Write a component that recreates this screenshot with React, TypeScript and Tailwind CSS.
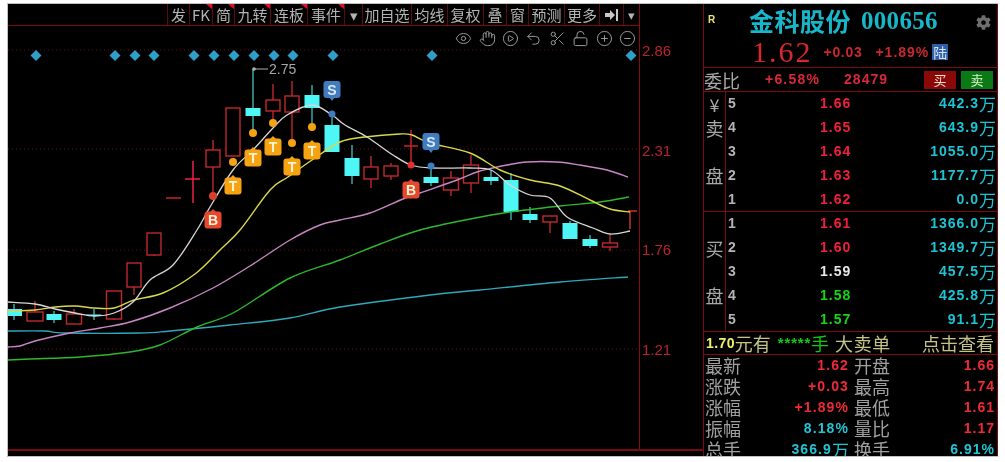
import { CircleMinus, CirclePlay, CirclePlus, Eye, Hand, LockOpen, Scissors, Undo2 } from "lucide-react";
import { FaCog } from "react-icons/fa";

const CJK = "font-['Noto_Sans_CJK_SC','Liberation_Sans',sans-serif]";
const NUM = "font-['Liberation_Sans','Noto_Sans_CJK_SC',sans-serif]";

const TOOLBAR = [
  { label: "发", w: "w-[22px]" },
  { label: "FK", w: "w-[23px]", flag: true },
  { label: "简", w: "w-[22px]", flag: true },
  { label: "九转", w: "w-[36px]", flag: true },
  { label: "连板", w: "w-[37px]", flag: true },
  { label: "事件", w: "w-[37px]", flag: true },
  { label: "▾", w: "w-[18px]" },
  { label: "加自选", w: "w-[49px]" },
  { label: "均线", w: "w-[36px]" },
  { label: "复权", w: "w-[36px]" },
  { label: "叠", w: "w-[23px]" },
  { label: "窗", w: "w-[22px]" },
  { label: "预测", w: "w-[36px]" },
  { label: "更多", w: "w-[35px]" },
];

const DIAMONDS = [36, 115, 135, 154, 194, 214, 234, 254, 274, 293, 333, 432, 631];

// x, body top, body bottom, wick top, wick bottom, half width
const UP: number[][] = [
  [35, 312, 321, 301, 321, 8], [74, 314, 324, 309, 324, 7.5], [114, 291, 319, 291, 320, 7.5],
  [134, 263, 287, 263, 295, 7], [154, 233, 255, 233, 256, 7], [213, 150, 167, 140, 197, 7],
  [233, 108, 156, 108, 156, 7], [273, 100, 111, 84, 124, 7], [292, 96, 112, 81, 140, 7],
  [371, 167, 179, 156, 188, 7], [391, 166, 176, 163, 180, 7], [451, 178, 190, 171, 196, 7.5],
  [471, 165, 183, 155, 193, 7.5], [550, 216, 222, 216, 233, 7], [610, 243, 247, 235, 251, 7.5],
];
const DOWN: number[][] = [
  [14, 309, 316, 304, 320, 8], [54, 314, 320, 311, 323, 7.5], [94, 314.5, 316, 309, 320, 7.5],
  [253, 108, 116, 69, 131, 7.5], [312, 95, 108, 85, 125, 7.5], [332, 125, 152, 115, 152, 7.5],
  [352, 158, 176, 145, 184, 7.5], [431, 177, 183, 165, 186, 7.5], [491, 177, 181, 170, 185, 7.5],
  [511, 180, 212, 173, 220, 7.5], [530, 214, 220, 207, 223, 7.5], [570, 223, 239, 221, 239, 7.5],
  [590, 239, 246, 235, 248, 7.5],
];

const MA5 = [[8,302],[35,304],[55,309],[75,313],[95,316],[114,313],[133,302],[150,280],[173,265],[197,230],[210,207],[233,170],[253,150],[273,128],[287,115],[312,105],[332,115],[345,125],[367,137],[393,155],[411,165],[431,168],[470,168],[491,170],[510,185],[530,195],[550,198],[567,217],[593,228],[610,234],[630,231]];
const MA10 = [[8,311],[35,310],[55,307],[75,306],[94,308],[114,308],[134,300],[163,293],[195,274],[220,250],[240,230],[270,190],[288,177],[312,160],[340,142],[365,137],[400,134],[412,135],[430,143],[470,153],[500,170],[530,180],[560,186],[590,200],[610,209],[630,212]];
const MA20 = [[8,347],[20,346],[35,341],[70,333],[100,328],[130,322],[170,308],[213,288],[250,266],[290,240],[320,225],[340,220],[370,213],[403,199],[420,193],[457,180],[477,172],[493,168],[507,165],[527,162],[557,162],[580,165],[607,170],[628,177]];
const MA60 = [[8,360],[30,359],[80,357],[130,352],[160,345],[197,327],[233,313],[290,278],[340,260],[380,244],[420,230],[470,219],[510,212],[560,206],[600,202],[629,197]];
const MA250 = [[8,331],[45,331],[65,333],[140,333],[170,331],[230,325],[290,318],[340,307],[430,295],[480,290],[560,282],[628,277]];

// catmull-rom through the points so the averages don't look angular
const smooth = (pts: number[][]) => {
  let d = `M${pts[0][0]} ${pts[0][1]}`;
  for (let i = 0; i < pts.length - 1; i++) {
    const p0 = pts[i - 1] ?? pts[i];
    const p1 = pts[i];
    const p2 = pts[i + 1];
    const p3 = pts[i + 2] ?? p2;
    d += ` C${p1[0] + (p2[0] - p0[0]) / 6} ${p1[1] + (p2[1] - p0[1]) / 6} ${p2[0] - (p3[0] - p1[0]) / 6} ${p2[1] - (p3[1] - p1[1]) / 6} ${p2[0]} ${p2[1]}`;
  }
  return d;
};

const Badge = ({ x, y, label, color }: { x: number; y: number; label: string; color: string }) => (
  <g>
    <path d={`M${x - 3} ${y - 8} L${x} ${y - 11} L${x + 3} ${y - 8} Z`} fill={color} />
    <rect x={x - 8.5} y={y - 8.5} width={17} height={17} rx={3} fill={color} />
    <text x={x} y={y + 5} textAnchor="middle" fontSize={14} fontWeight={700} fill="#fff3d0" fontFamily="Liberation Sans">{label}</text>
  </g>
);

const Chart = () => (
  <svg viewBox="8 26 631 424" width={631} height={424} className="block">
    {[50, 149, 250, 349].map((y) => (
      <line key={y} x1={8} x2={639} y1={y} y2={y} stroke="#6a0c12" strokeDasharray="1 3" />
    ))}
    {DIAMONDS.map((x) => (
      <path key={x} d={`M${x} 50 L${x + 5.5} 55.5 L${x} 61 L${x - 5.5} 55.5 Z`} fill="#2f9ec8" />
    ))}

    <path d="M174 198 H166 M181 198 H174" stroke="#c8242a" strokeWidth={1.5} />
    <path d="M193 161 V203 M185 179 H200" stroke="#f0214a" strokeWidth={1.5} />
    <path d="M411 130 V165 M404 146 H418" stroke="#c8242a" strokeWidth={1.5} />
    <path d="M628 211 H637 M630 211 V229" stroke="#c8342a" strokeWidth={1.5} />

    {UP.map(([x, t, b, wt, wb, h]) => (
      <g key={x} stroke="#c0282e" strokeWidth={1.4} fill="none">
        <path d={`M${x} ${wt} V${t} M${x} ${b} V${wb}`} />
        <rect x={x - h} y={t} width={h * 2} height={b - t} fill="#000" />
      </g>
    ))}
    {DOWN.map(([x, t, b, wt, wb, h]) => (
      <g key={x}>
        <path d={`M${x} ${wt} V${wb}`} stroke="#3fb4b4" strokeWidth={1.4} />
        <rect x={x - h} y={t} width={h * 2} height={b - t} fill="#4ef6f6" />
      </g>
    ))}

    <path d={smooth(MA250)} fill="none" stroke="#2fa8bc" strokeWidth={1.4} />
    <path d={smooth(MA60)} fill="none" stroke="#2cb82c" strokeWidth={1.4} />
    <path d={smooth(MA20)} fill="none" stroke="#c886c4" strokeWidth={1.4} />
    <path d={smooth(MA10)} fill="none" stroke="#d8d84a" strokeWidth={1.4} />
    <path d={smooth(MA5)} fill="none" stroke="#d8d8d8" strokeWidth={1.3} />

    {[[233, 162], [253, 133], [273, 123], [292, 143], [312, 127]].map(([x, y]) => (
      <circle key={x} cx={x} cy={y} r={4} fill="#f5a313" />
    ))}
    <circle cx={213} cy={196} r={4} fill="#d8402c" />
    <circle cx={411} cy={165} r={3.5} fill="#e03030" />
    <circle cx={332} cy={114} r={3.5} fill="#3f7cc0" />
    <circle cx={431} cy={166} r={3.5} fill="#3f7cc0" />

    <Badge x={233} y={186} label="T" color="#f5a313" />
    <Badge x={253} y={158} label="T" color="#f5a313" />
    <Badge x={273} y={147} label="T" color="#f5a313" />
    <Badge x={292} y={167} label="T" color="#f5a313" />
    <Badge x={312} y={151} label="T" color="#f5a313" />
    <Badge x={213} y={220} label="B" color="#e5472f" />
    <Badge x={411} y={190} label="B" color="#e5472f" />
    <path d="M329 97 L332 101 L335 97 Z M428 149 L431 153 L434 149 Z" fill="#3f7cc0" />
    <g>
      <rect x={323.5} y={81} width={17} height={17} rx={3} fill="#3f7cc0" />
      <text x={332} y={95} textAnchor="middle" fontSize={14} fontWeight={700} fill="#dfe8f5" fontFamily="Liberation Sans">S</text>
      <rect x={422.5} y={133} width={17} height={17} rx={3} fill="#3f7cc0" />
      <text x={431} y={147} textAnchor="middle" fontSize={14} fontWeight={700} fill="#dfe8f5" fontFamily="Liberation Sans">S</text>
    </g>

    <circle cx={254} cy={69} r={1.8} fill="#b0b0b0" />
    <line x1={254} x2={268} y1={69} y2={69} stroke="#b0b0b0" />
    <text x={269} y={74} fontSize={14} fill="#a8a8a8" fontFamily="Liberation Sans">2.75</text>
  </svg>
);

const Toolbar = () => (
  <div className="flex h-[22px] justify-end border-b border-[#7a0a12]">
    {TOOLBAR.map((item) => (
      <div
        key={item.label}
        className={`${item.w} relative flex items-center justify-center border-l border-[#5c0a10] text-[15px] leading-none text-[#b4b4b4] whitespace-nowrap ${CJK}`}
      >
        {item.label}
        {item.flag && (
          <span className="absolute right-0 top-0 h-0 w-0 border-l-[6px] border-t-[5px] border-l-transparent border-t-[#e0102a]" />
        )}
      </div>
    ))}
    <div className="flex w-[24px] items-center justify-center border-l border-[#5c0a10]">
      <svg width={14} height={12} viewBox="0 0 14 12">
        <path d="M0 4 H5 V1 L10 6 L5 11 V8 H0 Z M11 0 H13 V12 H11 Z" fill="#c8c8c8" />
      </svg>
    </div>
    <div className={`flex w-[16px] items-center justify-center border-l border-[#5c0a10] text-[13px] text-[#b4b4b4] ${CJK}`}>▾</div>
  </div>
);

const ChartTools = () => (
  <div className="absolute right-[3px] top-[4px] flex items-center gap-[6.4px] text-[#9a9a9a]">
    <Eye size={17} strokeWidth={1.4} />
    <Hand size={17} strokeWidth={1.4} />
    <CirclePlay size={17} strokeWidth={1.4} />
    <Undo2 size={17} strokeWidth={1.4} />
    <Scissors size={17} strokeWidth={1.4} />
    <LockOpen size={17} strokeWidth={1.4} />
    <CirclePlus size={17} strokeWidth={1.4} />
    <CircleMinus size={17} strokeWidth={1.4} />
  </div>
);

const SELL = [
  { side: "¥", n: "5", price: "1.66", vol: "442.3", c: "text-[#f0203c]" },
  { side: "卖", n: "4", price: "1.65", vol: "643.9", c: "text-[#f0203c]" },
  { side: "", n: "3", price: "1.64", vol: "1055.0", c: "text-[#f0203c]" },
  { side: "盘", n: "2", price: "1.63", vol: "1177.7", c: "text-[#f0203c]" },
  { side: "", n: "1", price: "1.62", vol: "0.0", c: "text-[#f0203c]" },
];
const BUY = [
  { side: "", n: "1", price: "1.61", vol: "1366.0", c: "text-[#f0203c]" },
  { side: "买", n: "2", price: "1.60", vol: "1349.7", c: "text-[#f0203c]" },
  { side: "", n: "3", price: "1.59", vol: "457.5", c: "text-[#e8e8e8]" },
  { side: "盘", n: "4", price: "1.58", vol: "425.8", c: "text-[#12d812]" },
  { side: "", n: "5", price: "1.57", vol: "91.1", c: "text-[#12d812]" },
];

const RED = "text-[#ee2a36]";
const CYAN = "text-[#22c4d4]";
const STATS = [
  { a: "最新", v: "1.62", vc: RED, b: "开盘", w: "1.66", wc: RED },
  { a: "涨跌", v: "+0.03", vc: RED, b: "最高", w: "1.74", wc: RED },
  { a: "涨幅", v: "+1.89%", vc: RED, b: "最低", w: "1.61", wc: RED },
  { a: "振幅", v: "8.18%", vc: CYAN, b: "量比", w: "1.17", wc: RED },
  { a: "总手", v: "366.9", unit: "万", vc: CYAN, b: "换手", w: "6.91%", wc: CYAN },
];

const QuoteRow = ({ row }: { row: (typeof SELL)[number] }) => (
  <div className="flex h-[23.8px] items-center">
    <div className={`flex h-full w-[22px] items-center justify-center border-r border-[#7a0a12] text-[18px] leading-none text-[#a8a8a8] ${CJK}`}>
      {row.side}
    </div>
    <div className={`w-[12px] pl-[2px] text-[14px] font-bold text-[#b4b4b4] ${NUM}`}>{row.n}</div>
    <div className={`ml-[82px] w-[40px] text-[14px] font-bold tracking-[1px] ${row.c} ${NUM}`}>{row.price}</div>
    <div className={`flex flex-1 items-center justify-end pr-[1px] text-[14px] font-bold tracking-[1px] text-[#1cc4d4] ${NUM}`}>
      {row.vol}
      <span className={`text-[17px] font-normal leading-none tracking-normal ${CJK}`}>万</span>
    </div>
  </div>
);

const QuotePanel = () => (
  <div className="flex h-full w-[295px] flex-col overflow-hidden border-x border-[#7a0a12]">
    <div className="relative flex h-[33px] shrink-0 items-center pl-[45px]">
      <span className={`absolute left-[4px] top-[8px] text-[10px] font-bold text-[#e8e07a] ${NUM}`}>R</span>
      <span className={`text-[25px] font-bold leading-none tracking-[0.5px] text-[#17b6c8] ${CJK}`}>金科股份</span>
      <span className="ml-[10px] font-['Liberation_Serif',serif] text-[25px] font-bold leading-none tracking-[0.3px] text-[#17b6c8]">000656</span>
      <FaCog size={15} className="absolute right-[6px] top-[11px] text-[#6e6e6e]" />
    </div>
    <div className="flex h-[31px] shrink-0 items-center border-b border-[#7a0a12] pl-[48px]">
      <span className="font-['Liberation_Serif',serif] text-[30px] leading-none tracking-[2px] text-[#d8282e]">1.62</span>
      <span className={`ml-[11px] text-[14px] font-bold tracking-[0.7px] text-[#c8282e] ${NUM}`}>+0.03</span>
      <span className={`ml-[13px] text-[14px] font-bold tracking-[1px] text-[#c8282e] ${NUM}`}>+1.89%</span>
      <span className={`ml-[3px] flex h-[16px] w-[16px] items-center justify-center bg-[#2f5fa8] text-[14px] leading-none text-[#d8e4f4] ${CJK}`}>陆</span>
    </div>
    <div className="flex h-[24px] shrink-0 items-center border-b border-[#7a0a12]">
      <span className={`text-[18px] leading-none text-[#a8a8a8] ${CJK}`}>委比</span>
      <span className={`ml-[25px] text-[14px] font-bold tracking-[1.2px] text-[#d8283c] ${NUM}`}>+6.58%</span>
      <span className={`ml-[24px] text-[14px] font-bold tracking-[1px] text-[#d8283c] ${NUM}`}>28479</span>
      <span className={`ml-[36px] flex h-[18px] w-[32px] items-center justify-center bg-[#8a0808] text-[13px] leading-none text-[#e8e0d0] ${CJK}`}>买</span>
      <span className={`ml-[5px] flex h-[18px] w-[32px] items-center justify-center bg-[#0c7a14] text-[13px] leading-none text-[#e0f0d0] ${CJK}`}>卖</span>
    </div>
    <div className="shrink-0 border-b border-[#7a0a12]">
      {SELL.map((row) => (
        <QuoteRow key={row.n + row.price} row={row} />
      ))}
    </div>
    <div className="shrink-0 border-b border-[#7a0a12]">
      {BUY.map((row) => (
        <QuoteRow key={row.n + row.price} row={row} />
      ))}
    </div>
    <div className={`flex h-[23px] shrink-0 items-center whitespace-nowrap border-b border-[#7a0a12] pl-[2px] text-[18px] leading-none text-[#c4c488] ${CJK}`}>
      <span className={`text-[14px] font-bold tracking-[0.4px] text-[#f0f070] ${NUM}`}>1.70</span>
      <span>元有</span>
      <span className={`ml-[7px] text-[15px] font-bold tracking-[0.8px] text-[#12c812] ${NUM}`}>*****</span>
      <span className="text-[#12c812]">手</span>
      <span className="ml-[6px] tracking-[0.6px]">大卖单</span>
      <span className="ml-auto pr-[3px]">点击查看</span>
    </div>
    {STATS.map((s) => (
      <div key={s.a} className="flex h-[21px] shrink-0 items-center whitespace-nowrap">
        <span className={`w-[38px] pl-[1px] text-[18px] leading-none text-[#a0a0a0] ${CJK}`}>{s.a}</span>
        <span className={`flex w-[107px] items-center justify-end text-[14px] font-bold tracking-[1.1px] ${s.vc} ${NUM}`}>
          {s.v}
          {s.unit && <span className={`text-[17px] font-normal leading-none tracking-normal ${CJK}`}>{s.unit}</span>}
        </span>
        <span className={`ml-[5px] w-[36px] text-[18px] leading-none text-[#a0a0a0] ${CJK}`}>{s.b}</span>
        <span className={`flex-1 pr-[2px] text-right text-[14px] font-bold tracking-[1px] ${s.wc} ${NUM}`}>{s.w}</span>
      </div>
    ))}
  </div>
);

const App = () => (
  <div className="flex h-[462px] w-[1005px] bg-white pb-[5px] pl-[7px] pr-[7px] pt-[3px] blur-[0.4px]">
    <div className="flex flex-1 border-x border-y border-[#c0c0c0] border-r-white bg-black">
      <div className="h-[447px] w-[695px] shrink-0 overflow-hidden border-b-2 border-[#7a0a12]">
        <div className="flex h-full">
          <div className="relative w-[631px] shrink-0">
            <Toolbar />
            <div className="relative">
              <ChartTools />
              <Chart />
            </div>
          </div>
          <div className={`flex flex-1 flex-col gap-[79.5px] border-l border-[#8a0a12] pl-[2px] pt-[37px] text-[15px] leading-[20px] text-[#b8232c] ${NUM}`}>
            <span>2.86</span>
            <span>2.31</span>
            <span>1.76</span>
            <span>1.21</span>
          </div>
        </div>
      </div>
      <QuotePanel />
    </div>
  </div>
);

export default App;
